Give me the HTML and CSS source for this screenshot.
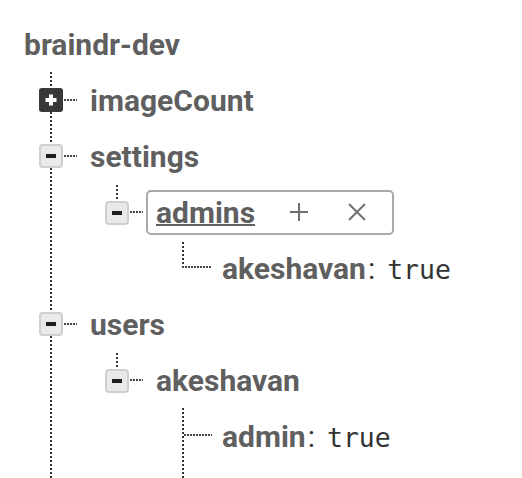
FILE: index.html
```html
<!DOCTYPE html>
<html>
<head>
<meta charset="utf-8">
<link rel="stylesheet" href="styles.css">
</head>
<body>
<div class="tree">
  <div class="row title">braindr-dev</div>
  <ul class="children top">
    <li class="node">
      <div class="row">
        <span class="stem"><span class="up"></span>
          <svg class="box" width="24" height="24" viewBox="0 0 24 24"><rect x="0" y="0" width="24" height="24" rx="3" fill="#383838"/><path d="M12 6.5v11M6.5 12h11" stroke="#fff" stroke-width="4"/></svg>
        <span class="down"></span></span>
        <span class="dash"></span>
        <span class="key">imageCount</span>
      </div>
    </li>
    <li class="node">
      <div class="row">
        <span class="stem"><span class="up"></span>
          <svg class="box" width="24" height="24" viewBox="0 0 24 24"><rect x="1" y="1" width="22" height="22" rx="3" fill="#e9e9e9" stroke="#cfcfcf" stroke-width="2"/><path d="M7 12h10" stroke="#1e1e1e" stroke-width="4"/></svg>
        <span class="down"></span></span>
        <span class="dash"></span>
        <span class="key">settings</span>
      </div>
      <ul class="children">
        <li class="node last">
          <div class="row">
            <span class="stem"><span class="up"></span>
              <svg class="box" width="24" height="24" viewBox="0 0 24 24"><rect x="1" y="1" width="22" height="22" rx="3" fill="#e9e9e9" stroke="#cfcfcf" stroke-width="2"/><path d="M7 12h10" stroke="#1e1e1e" stroke-width="4"/></svg>
            <span class="down"></span></span>
            <span class="dash"></span>
            <span class="key edit">
              <span class="key-text">admins</span>
              <svg class="act add" width="20" height="20" viewBox="0 0 20 20"><path d="M10 1v18M1 10h18" stroke="#707070" stroke-width="2"/></svg>
              <svg class="act del" width="20" height="20" viewBox="0 0 20 20"><path d="M2 2l16 16M18 2L2 18" stroke="#707070" stroke-width="2"/></svg>
            </span>
          </div>
          <ul class="children">
            <li class="node leaf last">
              <div class="row">
                <span class="elbow"></span>
                <span class="key">akeshavan<span class="colon">:</span><span class="value">true</span></span>
              </div>
            </li>
          </ul>
        </li>
      </ul>
    </li>
    <li class="node">
      <div class="row">
        <span class="stem"><span class="up"></span>
          <svg class="box" width="24" height="24" viewBox="0 0 24 24"><rect x="1" y="1" width="22" height="22" rx="3" fill="#e9e9e9" stroke="#cfcfcf" stroke-width="2"/><path d="M7 12h10" stroke="#1e1e1e" stroke-width="4"/></svg>
        <span class="down"></span></span>
        <span class="dash"></span>
        <span class="key">users</span>
      </div>
      <ul class="children">
        <li class="node last">
          <div class="row">
            <span class="stem"><span class="up"></span>
              <svg class="box" width="24" height="24" viewBox="0 0 24 24"><rect x="1" y="1" width="22" height="22" rx="3" fill="#e9e9e9" stroke="#cfcfcf" stroke-width="2"/><path d="M7 12h10" stroke="#1e1e1e" stroke-width="4"/></svg>
            <span class="down"></span></span>
            <span class="dash"></span>
            <span class="key">akeshavan</span>
          </div>
          <ul class="children">
            <li class="node leaf more">
              <div class="row">
                <span class="elbow"></span>
                <span class="key">admin<span class="colon">:</span><span class="value">true</span></span>
              </div>
            </li>
          </ul>
        </li>
      </ul>
    </li>
  </ul>
</div>
</body>
</html>
```
FILE: styles.css
```css
html, body {
  margin: 0;
  background: #fff;
}
body {
  overflow: hidden;
  height: 478px;
  font-family: Roboto, "Noto Sans", sans-serif;
  color: #5f5f5f;
}
.tree {
  padding-top: 16px;
}
.row {
  display: flex;
  align-items: center;
  height: 56px;
}
.title {
  padding-left: 24px;
  font-weight: 700;
  font-size: 30px;
}
.children {
  list-style: none;
  margin: 0 0 0 64px;
  padding: 0;
}
.children.top {
  margin-left: 50px;
  margin-top: 3px;
}
.children.top > .node:first-child > .row {
  margin-top: -3px;
}
.node {
  padding-left: 2px;
  background: repeating-linear-gradient(to bottom, #333 0 2px, transparent 2px 4px) left top / 2px 100% no-repeat;
}
.node.last {
  background: none;
}
.node.more {
  padding-bottom: 40px;
}
.stem {
  width: 24px;
  height: 56px;
  margin-left: -13px;
  display: flex;
  flex-direction: column;
  align-items: center;
  flex: none;
}
.up, .down {
  flex: 1;
  width: 2px;
}
.node.last > .row .up {
  margin-top: 1px;
  background: repeating-linear-gradient(to bottom, #333 0 2px, transparent 2px 4px);
}
.box {
  display: block;
  flex: none;
}
.dash {
  width: 13px;
  height: 2px;
  margin-left: 1px;
  background: repeating-linear-gradient(to right, #444 0 2px, transparent 2px 3px);
  flex: none;
}
.key {
  margin-left: 1px;
  padding: 0 10px;
  border: 2px solid transparent;
  font-weight: 700;
  font-size: 30px;
  white-space: nowrap;
}
.edit {
  box-sizing: border-box;
  height: 45px;
  display: flex;
  align-items: center;
  border-color: #a9a9a9;
  border-radius: 5px;
  margin-left: 3px;
  padding-left: 8px;
  padding-right: 25px;
}
.key-text {
  text-decoration: underline;
  text-decoration-thickness: 2px;
  text-underline-offset: 1px;
}
.act {
  display: block;
}
.add {
  margin-left: 34px;
}
.del {
  margin-left: 38px;
}
.elbow {
  align-self: flex-start;
  box-sizing: border-box;
  width: 28px;
  height: 29px;
  margin-top: -1px;
  background: repeating-linear-gradient(to right, #444 0 2px, transparent 2px 3px) left bottom / 100% 2px no-repeat;
  flex: none;
}
.leaf.last .elbow {
  margin-left: -2px;
  width: 30px;
  margin-top: 2px;
  height: 26px;
  background:
    repeating-linear-gradient(to right, #444 0 2px, transparent 2px 3px) left bottom / 100% 2px no-repeat,
    repeating-linear-gradient(to bottom, #333 0 2px, transparent 2px 4px) left top / 2px 100% no-repeat;
}
.leaf .key {
  margin-left: 0;
  padding-left: 8px;
}
.colon {
  font-weight: 400;
  color: #333;
  margin-left: 2px;
  margin-right: 12px;
}
.value {
  font-family: "DejaVu Sans Mono", "Liberation Mono", monospace;
  font-weight: 400;
  font-size: 26.5px;
  color: #333;
}
```
